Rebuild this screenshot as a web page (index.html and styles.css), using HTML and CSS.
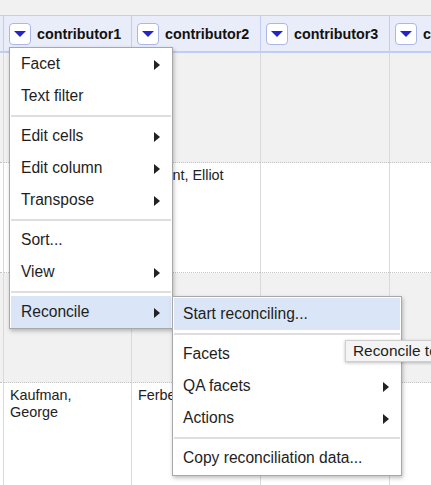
FILE: index.html
```html
<!DOCTYPE html>
<html>
<head>
<meta charset="utf-8">
<link rel="stylesheet" href="styles.css">
</head>
<body>
<div class="page">
  <div class="topband"></div>
  <div class="grid">
    <div class="hcell first"></div>
    <div class="hcell"><span class="dd"><svg width="12" height="6" viewBox="0 0 12 6"><polygon points="0,0 12,0 6,6" fill="#2424c8"/></svg></span><span class="hname">contributor1</span></div>
    <div class="hcell"><span class="dd"><svg width="12" height="6" viewBox="0 0 12 6"><polygon points="0,0 12,0 6,6" fill="#2424c8"/></svg></span><span class="hname">contributor2</span></div>
    <div class="hcell"><span class="dd"><svg width="12" height="6" viewBox="0 0 12 6"><polygon points="0,0 12,0 6,6" fill="#2424c8"/></svg></span><span class="hname">contributor3</span></div>
    <div class="hcell"><span class="dd"><svg width="12" height="6" viewBox="0 0 12 6"><polygon points="0,0 12,0 6,6" fill="#2424c8"/></svg></span><span class="hname">contributor4</span></div>

    <div class="cell odd first"></div>
    <div class="cell odd"></div>
    <div class="cell odd"></div>
    <div class="cell odd"></div>
    <div class="cell odd"></div>

    <div class="cell even first"></div>
    <div class="cell even"></div>
    <div class="cell even">Nugent, Elliot</div>
    <div class="cell even"></div>
    <div class="cell even"></div>

    <div class="cell odd first"></div>
    <div class="cell odd"></div>
    <div class="cell odd"></div>
    <div class="cell odd"></div>
    <div class="cell odd"></div>

    <div class="cell even last first"></div>
    <div class="cell even last">Kaufman,<br>George</div>
    <div class="cell even last">Ferber, Edna</div>
    <div class="cell even last"></div>
    <div class="cell even last"></div>
  </div>

  <div class="menu main">
    <div class="item">Facet<span class="arrow"></span></div>
    <div class="item">Text filter</div>
    <div class="sep"></div>
    <div class="item">Edit cells<span class="arrow"></span></div>
    <div class="item">Edit column<span class="arrow"></span></div>
    <div class="item">Transpose<span class="arrow"></span></div>
    <div class="sep"></div>
    <div class="item">Sort...</div>
    <div class="item">View<span class="arrow"></span></div>
    <div class="sep"></div>
    <div class="item active">Reconcile<span class="arrow"></span></div>
  </div>

  <div class="menu sub">
    <div class="item active">Start reconciling...</div>
    <div class="sep"></div>
    <div class="item">Facets</div>
    <div class="item">QA facets<span class="arrow"></span></div>
    <div class="item">Actions<span class="arrow"></span></div>
    <div class="sep"></div>
    <div class="item">Copy reconciliation data...</div>
  </div>

  <div class="tooltip">Reconcile to another service</div>
</div>
</body>
</html>
```
FILE: styles.css
```css
html, body {
  margin: 0;
  padding: 0;
  background: #f2f2f2;
}
.page {
  position: relative;
  width: 431px;
  height: 485px;
  overflow: hidden;
  font-family: "Liberation Sans", Arial, sans-serif;
  color: #222;
}
.topband {
  height: 15px;
  background: #f1f1f1;
}
.grid {
  display: grid;
  grid-template-columns: 3px 128px 129px 129px 160px;
  grid-template-rows: 38px 110px 110px 110px 110px;
}
.hcell {
  box-sizing: border-box;
  background: #e9ecf9;
  border-top: 1px solid #c3ccf1;
  border-bottom: 2px solid #c3ccf1;
  border-left: 1px solid #c3ccf1;
  display: flex;
  align-items: center;
  padding-left: 5px;
  gap: 6px;
  white-space: nowrap;
  overflow: hidden;
}
.hcell.first {
  border-left: none;
  padding-left: 0;
}
.dd {
  box-sizing: border-box;
  width: 22px;
  height: 22px;
  flex: none;
  background: #fff;
  border: 1px solid #a9b7ea;
  border-radius: 4px;
  display: flex;
  align-items: center;
  justify-content: center;
}
.dd svg {
  display: block;
  margin-top: 1px;
}
.hname {
  font-weight: bold;
  font-size: 14.3px;
  color: #111;
}
.cell {
  box-sizing: border-box;
  border-left: 1px solid #dadada;
  border-bottom: 1px dotted #c4c4c4;
  padding: 4px 6px;
  font-size: 14.4px;
  line-height: 17px;
  color: #222;
}
.cell.first {
  border-left: none;
}
.cell.odd { background: #f1f1f1; }
.cell.even { background: #ffffff; }
.cell.last { border-bottom: none; }

.menu {
  position: absolute;
  box-sizing: border-box;
  background: #fff;
  border: 1px solid #a8a8a8;
  box-shadow: 1px 2px 4px rgba(0, 0, 0, 0.25);
  font-size: 15.6px;
  color: #1e1e1e;
}
.menu.main {
  left: 9px;
  top: 47px;
  width: 164px;
  padding: 0 1px;
}
.menu.sub {
  left: 172px;
  top: 296px;
  width: 230px;
  padding: 1px;
}
.item {
  height: 32px;
  line-height: 32px;
  padding: 0 11px 0 10px;
  display: flex;
  align-items: center;
  justify-content: space-between;
  white-space: nowrap;
}
.menu.sub .item {
  padding-left: 9px;
}
.item.active {
  background: #dae6f7;
}
.arrow {
  width: 0;
  height: 0;
  border-left: 6px solid #222;
  border-top: 5px solid transparent;
  border-bottom: 5px solid transparent;
  margin-top: 1px;
}
.sep {
  height: 2px;
  margin: 3px 0;
  background: #dedede;
}
.tooltip {
  position: absolute;
  left: 345px;
  top: 340px;
  height: 22px;
  box-sizing: border-box;
  padding: 0 7px;
  line-height: 20px;
  font-size: 15.4px;
  white-space: nowrap;
  background: #f4f4f4;
  border: 1px solid #cfcfcf;
  box-shadow: 0 1px 3px rgba(0, 0, 0, 0.25);
  color: #1e1e1e;
}
```
